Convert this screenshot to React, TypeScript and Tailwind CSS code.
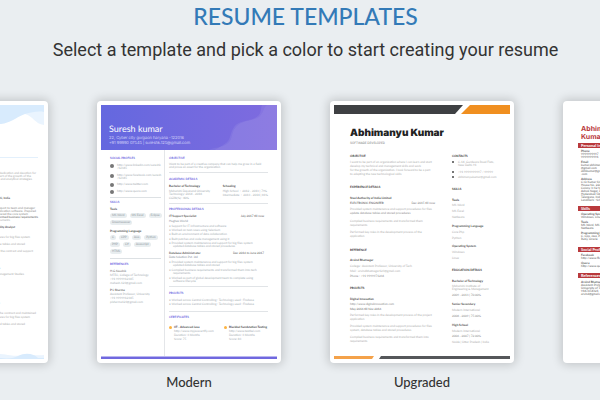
import type { ReactNode } from "react";
import clsx from "clsx";

type Row = [text: string, className?: string];

// One 3px high line of print per row, spacing comes from the row's own margin
function Rows({ rows, className }: { rows: Row[]; className?: string }) {
  return (
    <div className={className}>
      {rows.map(([text, cls], i) => (
        <p key={i} className={clsx("h-[3px]", cls)}>
          {text}
        </p>
      ))}
    </div>
  );
}

function Pair({ left, right, className }: { left: string; right: string; className?: string }) {
  return (
    <div className={clsx("flex h-[3px] justify-between", className)}>
      <span className="font-bold">{left}</span>
      <span>{right}</span>
    </div>
  );
}

function TemplateCard({ label, children }: { label: string; children: ReactNode }) {
  return (
    <figure className="w-[184px] shrink-0">
      <div className="rounded-sm bg-white p-1 shadow-[0_0_10px_2px_rgba(0,0,0,0.17)]">
        <div className="flex h-[254px] flex-col overflow-hidden text-[3px] leading-[3px] whitespace-nowrap [text-rendering:geometricPrecision]">
          {children}
        </div>
      </div>
      <figcaption className="mt-2 text-center text-[13px] leading-[22px] font-medium text-[#333]">{label}</figcaption>
    </figure>
  );
}

/* ---------- Classic ---------- */

const CLASSIC_ROWS: Row[] = [
  ["to obtain a position with complete dedication and devotion for", "mt-[14px] pr-[2px]"],
  ["the organization and to be a part of the growth of the", "pr-[7px]"],
  ["company by using technical and analytical strategies", "pr-[6px]"],
  ["Delhi, India", "mt-4 pr-[28px] font-bold text-[#555]"],
  ["Provided technical support to team and manager", "mt-[7px] pr-[3px] text-[#888]"],
  ["Designed application software. Prepared", "pr-[2px] text-[#888]"],
  ["and delivered the core system", "pr-[10px] text-[#888]"],
  ["Transformed business requirements", "text-[#555]"],
  ["to documents", "pr-[28px]"],
  ["Quality Analyst", "mt-[4px] pr-[23px] font-bold text-[#555]"],
  ["Provided procedures for big files system", "mt-[7px] pr-[8px]"],
  ["updated database tables and stored", "mt-[4px] pr-[13px]"],
  ["Performed key roles of the contract and support", "mt-[4px] pr-[5px]"],
  ["Team", "mt-[14px] pr-[38px] font-bold text-[#555]"],
  ["of Engineering and Management Studies", "mt-[3px] pr-[14px]"],
  ["2018", "mt-[26px] pr-[38px]"],
  ["Performed key roles of the contract and maintained", "mt-[7px] pr-[2px]"],
  ["procedures for big files system", "mt-[1px] pr-[8px]"],
  ["updated tables and stored", "mt-[4px] pr-[13px]"],
];

function ClassicResume() {
  return (
    <>
      <svg viewBox="0 0 176 21" className="h-[21px] w-full shrink-0" aria-hidden="true">
        <path d="M0 0H176V20C167 19 165 11 157 9L140 0Z" fill="#eaf4fe" />
        <path d="M0 0H176V7C170 6 164 7 157 9C147 13 142 18 133 19C110 21 90 6 60 6C36 6 20 12 0 18Z" fill="#d8ebfd" />
      </svg>
      <div className="flex-1 pt-[31px] pr-[6px] text-right text-[#aaa]">
        <div className="h-px bg-[#e3f0fc]" />
        <Rows rows={CLASSIC_ROWS} />
      </div>
      <svg viewBox="0 0 176 6" className="h-[6px] w-full shrink-0" aria-hidden="true">
        <path d="M0 2C60 4 90 0 132 1C144 2 148 4 156 2C164 1 168 3 176 2V6H0Z" fill="#eaf4fe" />
        <path d="M0 3C60 1 100 5 132 5C142 6 146 5 150 3C158 -1 166 1 170 5H176V6H0Z" fill="#d8ebfd" />
      </svg>
    </>
  );
}

/* ---------- Modern ---------- */

const heading = "font-bold text-[#6a63e0]";
const strong = "font-bold text-[#444]";

const SOCIAL: { lines: string[]; gap: string }[] = [
  { lines: ["http://www.linkedin.com/sureshk", "/12345"], gap: "mt-[4px]" },
  { lines: ["http://www.facebook.com/suresh", "/12345"], gap: "mt-[4px]" },
  { lines: ["http://www.twitter.com"], gap: "mt-[3px]" },
  { lines: ["http://www.quora.com"], gap: "mt-[4px]" },
];

function Pills({ items }: { items: string[][] }) {
  return (
    <div className="mt-[2px] flex flex-col gap-[2px]">
      {items.map((line, i) => (
        <div key={i} className="flex gap-[3px]">
          {line.map((item) => (
            <span key={item} className="rounded-full bg-[#e8edef] px-[2px] py-px text-[#8d979c]">
              {item}
            </span>
          ))}
        </div>
      ))}
    </div>
  );
}

function ModernSidebar() {
  return (
    <div className="w-[64px] shrink-0 border-r border-[#e4e6e9] pr-[3px] pl-[9px]">
      <p className={clsx("mt-[7px] h-[3px]", heading)}>SOCIAL PROFILES</p>
      {SOCIAL.map(({ lines, gap }, i) => (
        <div key={i} className={clsx("flex gap-[3px]", gap)}>
          <span className="-mb-px h-[4px] w-[4px] shrink-0 rounded-full bg-[#777]" />
          <div>
            {lines.map((line) => (
              <p key={line} className="h-[3px]">
                {line}
              </p>
            ))}
          </div>
        </div>
      ))}
      <div className="mt-[4px] h-px bg-[#dde1e4]" />
      <Rows rows={[["SKILLS", clsx("mt-[3px]", heading)], ["Tools", clsx("mt-[4px]", strong)]]} />
      <Pills items={[["MS Word", "MS Excel", "Eclipse"], ["Dreamweaver"]]} />
      <p className={clsx("mt-[5px] h-[3px]", strong)}>Programming Language</p>
      <Pills items={[["C", "CPP", "Java", "Python"], ["PHP", "C#", "Javascript"], ["HTML"]]} />
      <div className="mt-[4px] h-px bg-[#dde1e4]" />
      <Rows
        rows={[
          ["REFERENCES", clsx("mt-[4px]", heading)],
          ["H.G Kaushik", "mt-[4px] text-[#666]"],
          ["MTEC, College of Technology", "mt-px"],
          ["+91 9999912345", "mt-px"],
          ["mahesh.123@gmail.com", "mt-px"],
          ["P L Sharma", "mt-[4px] font-bold text-[#666]"],
          ["Assistant Professor, University", "mt-px"],
          ["+91 9999912345", "mt-px"],
          ["plsharma123@gmail.com", "mt-px"],
        ]}
      />
    </div>
  );
}

function Rule({ className }: { className: string }) {
  return <div className={clsx("h-px bg-[#e1e4e7]", className)} />;
}

function Certificate({ name, site, score }: { name: string; site: string; score: string }) {
  return (
    <div className="flex gap-[2px]">
      <span className="h-[3px] w-[3px] shrink-0 rounded-full bg-[#fdb340]" />
      <Rows
        rows={[
          [name, strong],
          [site, "mt-px"],
          ["Duration: 3 Months", "mt-px"],
          [score, "mt-px"],
        ]}
      />
    </div>
  );
}

function ModernMain() {
  return (
    <div className="min-w-0 flex-1 pr-[9px] pl-[4px]">
      <Rows
        rows={[
          ["OBJECTIVE", clsx("mt-[7px]", heading)],
          ["Want to be part of a creative company that can help me grow in a field", "mt-[3px]"],
          ["and prove an asset for the organization"],
        ]}
      />
      <Rule className="mt-[3px]" />
      <p className={clsx("mt-[5px] h-[3px]", heading)}>ACADEMIC DETAILS</p>
      <div className="mt-[4px] grid grid-cols-[5fr_4fr]">
        <Rows
          rows={[
            ["Bachelor of Technology", strong],
            ["Maharishi Dayanand University", "mt-[2px]"],
            ["Technology: 2014 - 2018"],
            ["CGPA(%) : 80%", "mt-px"],
          ]}
        />
        <Rows
          rows={[
            ["Schooling", strong],
            ["High School  :  2012 - 2013 | 79%", "mt-[2px] whitespace-pre"],
            ["Intermediate  :  2013 - 2014 | 81%", "mt-px whitespace-pre"],
          ]}
        />
      </div>
      <Rule className="mt-[3px]" />
      <p className={clsx("mt-[4px] h-[3px]", heading)}>PROFESSIONAL DETAILS</p>
      <Pair className="mt-[4px] pr-[4px] text-[#555]" left="IT Support Specialist" right="July 2017 till now" />
      <Rows
        rows={[
          ["Hughes World", "mt-[2px] text-[#7f8c95]"],
          ["•  Support for IT infrastructure and software", "mt-[2px]"],
          ["•  Worked on test cases using Selenium", "mt-px"],
          ["•  Built an environment of data collaboration", "mt-px"],
          ["•  Built patches and code management using it", "mt-[2px]"],
          ["•  Provided system maintenance and support for big files system", "mt-px"],
          ["updated database tables and stored procedures", "pl-[4px]"],
        ]}
      />
      <Pair className="mt-[4px] pr-[4px] text-[#555]" left="Database Administrator" right="Dec 2016 to June 2017" />
      <Rows
        rows={[
          ["Data Solution Pvt. Ltd", "mt-px text-[#7f8c95]"],
          ["•  Provided system maintenance and support for big files system", "mt-[2px]"],
          ["updated database tables and stored", "pl-[4px]"],
          ["•  Compiled business requirements and transformed them into tech", "mt-[2px]"],
          ["requirements", "pl-[4px]"],
          ["•  Worked as part of global development team to complete using", "mt-[2px]"],
          ["software lifecycle", "pl-[4px]"],
        ]}
      />
      <Rule className="mt-[3px]" />
      <Rows
        rows={[
          ["PROJECTS", clsx("mt-[5px]", heading)],
          ["•  Worked across Central Controlling : Technology used : Firebase", "mt-[4px]"],
          ["•  Worked across Central Controlling : Technology used : Firebase", "mt-px"],
        ]}
      />
      <Rule className="mt-[5px]" />
      <p className={clsx("mt-[4px] h-[3px]", heading)}>CERTIFICATES</p>
      <div className="mt-[7px] grid grid-cols-[5fr_4fr]">
        <Certificate name="IIT - Advanced Java" site="http://www.myjavacertify.com" score="Score: 75" />
        <Certificate name="Blackbel Sandstation Testing" site="http://www.testbel.com" score="Score: 83" />
      </div>
    </div>
  );
}

function ModernResume() {
  return (
    <>
      <div className="grid h-[45px] shrink-0 grid-cols-1 bg-linear-to-r from-[#6468df] to-[#7f6bdf] text-white">
        <svg viewBox="0 0 176 45" className="col-start-1 row-start-1 h-[45px] w-full" aria-hidden="true">
          <path
            d="M176 0H166C162 3 163 8 158 12C150 17 141 15 135 22C129 29 133 34 126 39C120 43 114 42 108 45H176Z"
            fill="#fff"
            fillOpacity="0.06"
          />
          <path
            d="M176 0H161C159 6 161 9 154 13C146 17 138 15 133 22C129 28 130 34 125 38C120 42 116 43 114 45H176Z"
            fill="#fff"
            fillOpacity="0.07"
          />
        </svg>
        <div className="col-start-1 row-start-1 pt-[18px] pl-[8px] font-[Inter] text-[4px] leading-[5px] font-light">
          <p className="font-[Lato] text-[9px] leading-[11px] font-normal">Suresh kumar</p>
          <p className="mt-px text-[#e6e6ff]">22, Cyber city gurgaon haryana -122016</p>
          <p className="text-[#e6e6ff]">+91 99990 07545 | sureshk.125@gmail.com</p>
        </div>
      </div>
      <div className="flex flex-1 text-[#a3abb0]">
        <ModernSidebar />
        <ModernMain />
      </div>
      <div className="h-[3px] shrink-0 border-t border-[#b9b6f0] bg-[#7068df]" />
    </>
  );
}

/* ---------- Upgraded ---------- */

const UPGRADED_LEFT: Row[] = [
  ["REFERENCE", "mt-[11px] font-bold text-[#333]"],
  ["Arvind Bhatnagar", "mt-[7px] font-bold text-[#444]"],
  ["College : Assistant Professor, University of Tech", "mt-[3px]"],
  ["Mail : arvindbhatnagar123@gmail.com", "mt-[2px]"],
  ["Phone : +91 9999971234", "mt-[2px] text-[#888]"],
  ["PROJECTS", "mt-[9px] font-bold text-[#333]"],
  ["Digital Innovation", "mt-[8px] font-bold text-[#444]"],
  ["http://www.digitalinnovation.com", "mt-[2px] text-[#888]"],
  ["May 2016 till Nov 2016", "mt-[2px] text-[#666]"],
  ["Performed key roles in the development process of the project", "mt-[3px]"],
  ["application", "mt-px"],
  ["Provided system maintenance and support procedures for files", "mt-[4px]"],
  ["system, database tables and stored procedures", "mt-px"],
  ["Compiled business requirements and transformed them into", "mt-[4px]"],
  ["requirements", "mt-px"],
];

const UPGRADED_RIGHT: Row[] = [
  ["SKILLS", "mt-[9px] font-bold text-[#333]"],
  ["Tools", "mt-[8px] font-bold text-[#333]"],
  ["MS Word", "mt-[2px]"],
  ["MS Excel", "mt-[3px]"],
  ["Netbeans", "mt-[3px]"],
  ["Programming Language", "mt-[6px] font-bold text-[#444]"],
  ["Core Php", "mt-[3px]"],
  ["Python", "mt-[3px]"],
  ["Operating System", "mt-[5px] font-bold text-[#444]"],
  ["Windows", "mt-[3px]"],
  ["Linux", "mt-[3px]"],
  ["EDUCATION DETAILS", "mt-[9px] font-bold text-[#333]"],
  ["Bachelor of Technology", "mt-[8px] font-bold text-[#444]"],
  ["Maharishi Institute of", "mt-[2px]"],
  ["Engineering & Management"],
  ["2009 - 2013 | 70.00%", "mt-[3px] text-[#888]"],
  ["Senior Secondary", "mt-[6px] font-bold text-[#444]"],
  ["Modern International", "mt-[3px]"],
  ["2008 - 2009 | 75.00%", "mt-[3px] text-[#888]"],
  ["High School", "mt-[6px] font-bold text-[#444]"],
  ["Modern International", "mt-[3px]"],
  ["2006 - 2007 | 72.00%", "mt-[2px] text-[#888]"],
  ["Noida | Uttar Pradesh | India", "mt-[3px]"],
];

const CONTACTS = [
  ["C-14, Gurdwara Road Flats,", "mt-[3px]"],
  ["+91 9999999997 / 99999", "mt-[4px]"],
  ["abhimanyukumar@gmail.com", "mt-[2px]"],
];

function UpgradedResume() {
  return (
    <>
      <svg viewBox="0 0 176 9" preserveAspectRatio="none" className="h-[9px] w-full shrink-0" aria-hidden="true">
        <path d="M0 0H129L121 9H0Z" fill="#3e4043" />
        <path d="M136 0H176V9H127Z" fill="#f08f20" />
      </svg>
      <div className="flex-1 px-[16px] text-[#aaa]">
        <p className="mt-[13px] font-[Inter] text-[10px] leading-[13px] font-black text-[#222]">Abhimanyu Kumar</p>
        <p className="mt-[2px] h-[3px] font-[Inter] text-[#777]">SOFTWARE DEVELOPER</p>
        <div className="mt-[10px] grid grid-cols-[102px_1fr]">
          <div className="w-[85px]">
            <Rows
              rows={[
                ["OBJECTIVE", "font-bold text-[#333]"],
                ["I want to be part of an organization where I can learn and start", "mt-[3px]"],
                ["develop my technical and management skills and work", "mt-px"],
                ["for the growth of the organization. I look forward to be a part", "mt-px"],
                ["to adapting the new technological skills", "mt-px"],
                ["EXPERIENCE DETAILS", "mt-[10px] font-bold text-[#333]"],
                ["Steel Authority of India Limited", "mt-[8px] font-bold text-[#444]"],
              ]}
            />
            <Pair className="mt-[2px] text-[#777]" left="ELECTRONIC ENGINEER" right="Dec 2015 till now" />
            <Rows
              rows={[
                ["Provided system maintenance and support procedures for files", "mt-[3px]"],
                ["update database tables and stored procedures", "mt-px text-[#888]"],
                ["Compiled business requirements and transformed them", "mt-[5px]"],
                ["requirements", "mt-px"],
                ["Performed key roles in the development process of the", "mt-[4px]"],
                ["application", "mt-px"],
              ]}
            />
            <Rows rows={UPGRADED_LEFT} />
          </div>
          <div>
            <p className="h-[3px] font-bold text-[#333]">CONTACTS</p>
            {CONTACTS.map(([text, gap], i) => (
              <div key={text} className={clsx("flex gap-[4px]", gap)}>
                <span className="h-[2px] w-[2px] shrink-0 bg-[#777]" />
                <div>
                  <p>{text}</p>
                  {i === 0 && <p>New Delhi-91</p>}
                </div>
              </div>
            ))}
            <Rows rows={UPGRADED_RIGHT} />
          </div>
        </div>
      </div>
      <svg viewBox="0 0 176 3" preserveAspectRatio="none" className="h-[3px] w-full shrink-0" aria-hidden="true">
        <path d="M0 0H40L38 3H0Z" fill="#f4a24a" />
        <path d="M47 0H176V3H45Z" fill="#55575a" />
      </svg>
    </>
  );
}

/* ---------- Professional ---------- */

const PROFESSIONAL: { title: string; rows: Row[]; gap: string }[] = [
  {
    title: "Personal Info",
    gap: "mt-[2px]",
    rows: [
      ["Phone", "mt-[2px] font-bold"],
      ["9999999997"],
      ["9999999991"],
      ["Email", "mt-[2px] font-bold"],
      ["kumar.abhimanyu"],
      ["@gmail.com"],
      ["abhikumar@gmail"],
      [".com"],
      ["Address", "mt-[2px] font-bold"],
      ["C/O Kumar Singh"],
      ["House No. 22A"],
      ["Colony 3/12 New"],
      ["Ashok Nagar, Delhi"],
      ["Hyderabad 500001"],
      ["Telangana, India"],
      ["Landmark : School"],
    ],
  },
  {
    title: "Skills",
    gap: "mt-[4px]",
    rows: [
      ["Operating System", "mt-[2px] font-bold"],
      ["Windows, Linux"],
      ["Tools", "mt-[2px] font-bold"],
      ["MS Word, MS Excel"],
      ["Netbeans"],
      ["Programming Language", "mt-[2px] font-bold"],
      ["C, Cpp, Java, PHP"],
      ["Ruby, Oracle"],
    ],
  },
  {
    title: "Social Profiles",
    gap: "mt-[6px]",
    rows: [
      ["Facebook", "mt-[2px] font-bold"],
      ["http://www.fb.com"],
      ["Quora", "mt-[2px] font-bold"],
      ["http://www.quora.com"],
    ],
  },
  {
    title: "References",
    gap: "mt-[5px]",
    rows: [
      ["Arvind Bhatnagar", "mt-[3px] font-bold"],
      ["Assistant Professor"],
      ["University of Tech"],
      ["9187654321"],
      ["arvind@gmail.com"],
    ],
  },
];

function ProfessionalResume() {
  return (
    <div className="w-[60px] pt-[20px] pl-[11px] leading-[3px] text-[#555]">
      <p className="pl-[3px] font-[Inter] text-[7px] leading-[8px] font-bold text-[#b9393c]">
        Abhimanyu
        <br />
        Kumar
      </p>
      {PROFESSIONAL.map(({ title, rows, gap }) => (
        <section key={title} className={gap}>
          <h3 className="bg-[#b9393c] pl-[3px] text-[4px] leading-[5px] font-bold text-white">{title}</h3>
          <Rows rows={rows} className="pl-[3px]" />
        </section>
      ))}
    </div>
  );
}

export default function App() {
  return (
    <main className="min-h-screen overflow-hidden bg-[#eaeef1] pl-[11px] font-[Lato,sans-serif]">
      <h1 className="text-center text-[23px] leading-8 font-medium text-[#337ab7]">RESUME TEMPLATES</h1>
      <p className="mt-1 text-center font-[Roboto] text-[18px] leading-[28px] text-[#333]">
        Select a template and pick a color to start creating your resume
      </p>
      <div className="mt-[37px] flex justify-center gap-[49px]">
        <TemplateCard label="Classic">
          <ClassicResume />
        </TemplateCard>
        <TemplateCard label="Modern">
          <ModernResume />
        </TemplateCard>
        <TemplateCard label="Upgraded">
          <UpgradedResume />
        </TemplateCard>
        <TemplateCard label="Professional">
          <ProfessionalResume />
        </TemplateCard>
      </div>
    </main>
  );
}
